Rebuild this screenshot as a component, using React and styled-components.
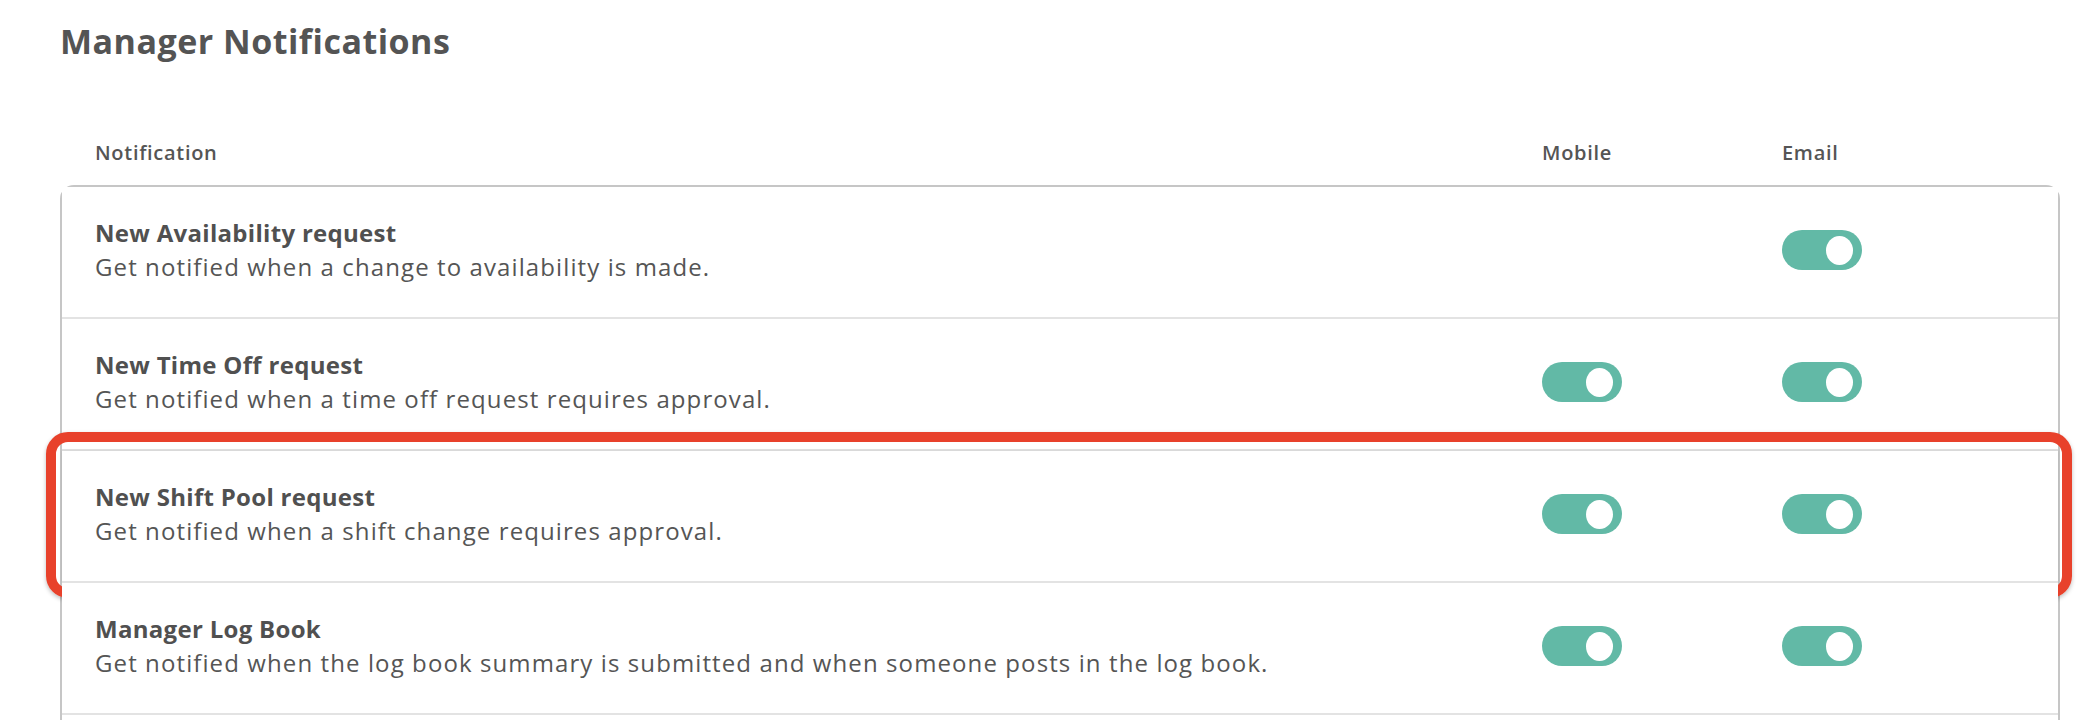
import React from "react";
import styled, { createGlobalStyle } from "styled-components";

const Global = createGlobalStyle`
  html, body { margin: 0; padding: 0; background: #ffffff; }
  body { font-family: "Open Sans", "Liberation Sans", sans-serif; color: #555555; }
  * { box-sizing: border-box; }
`;

const Page = styled.div`
  padding: 19px 28px 0 60px;
`;

const Title = styled.h1`
  margin: 0;
  font-size: 34px;
  line-height: 44px;
  font-weight: 700;
  color: #545454;
  letter-spacing: 0.5px;
`;

const HeaderRow = styled.div`
  display: grid;
  grid-template-columns: 1fr 240px 278px;
  padding: 0 0 0 35px;
  margin-top: 72px;
  height: 34px;
  align-items: center;
`;

const HeaderCell = styled.div`
  font-size: 20px;
  font-weight: 600;
  color: #555555;
  letter-spacing: 0.7px;
`;

const Card = styled.div`
  margin-top: 16px;
  border: 2px solid #c6c6c6;
  border-radius: 14px;
  background: #ffffff;
`;

const Row = styled.div`
  position: relative;
  display: grid;
  grid-template-columns: 1fr 240px 276px;
  align-items: center;
  height: 132px;
  padding: 0 0 0 33px;
  border-bottom: 2px solid #e3e3e3;
  background: #ffffff;
  box-shadow: ${(p) => (p.$highlight ? "0 0 3px rgba(0,0,0,0.12)" : "none")};
`;

const Info = styled.div`
  display: flex;
  flex-direction: column;
  gap: 6px;
  padding-bottom: 5px;
`;

const Name = styled.div`
  font-size: 24px;
  line-height: 28px;
  font-weight: 700;
  color: #505050;
  letter-spacing: 0.3px;
`;

const Desc = styled.div`
  font-size: 24px;
  line-height: 28px;
  font-weight: 400;
  color: #555555;
  letter-spacing: 1.1px;
`;

const Cell = styled.div`
  display: flex;
  align-items: center;
  height: 44px;
  padding-bottom: 4px;
`;

const Toggle = styled.div`
  width: 80px;
  height: 40px;
  border-radius: 20px;
  background: ${(p) => (p.$on ? "#62b9a6" : "#d4d4d4")};
  display: flex;
  align-items: center;
  justify-content: ${(p) => (p.$on ? "flex-end" : "flex-start")};
  padding: 0 9px;
`;

const Knob = styled.span`
  width: 27px;
  height: 29px;
  border-radius: 50%;
  background: #ffffff;
`;

const Highlight = styled.div`
  position: absolute;
  top: -19px;
  bottom: -17px;
  left: -16px;
  right: -14px;
  border: 10px solid #e8412b;
  border-radius: 22px;
  box-shadow: 0 2px 4px rgba(0, 0, 0, 0.25);
  pointer-events: none;
`;

const rows = [
  {
    name: "New Availability request",
    desc: "Get notified when a change to availability is made.",
    mobile: null,
    email: true,
  },
  {
    name: "New Time Off request",
    desc: "Get notified when a time off request requires approval.",
    mobile: true,
    email: true,
  },
  {
    name: "New Shift Pool request",
    desc: "Get notified when a shift change requires approval.",
    mobile: true,
    email: true,
    highlight: true,
  },
  {
    name: "Manager Log Book",
    desc: "Get notified when the log book summary is submitted and when someone posts in the log book.",
    mobile: true,
    email: true,
  },
  {
    name: "New Shift Trade request",
    desc: "Get notified when a shift trade requires approval.",
    mobile: true,
    email: true,
  },
];

function Switch({ on }) {
  return (
    <Toggle $on={on} role="switch" aria-checked={on}>
      <Knob />
    </Toggle>
  );
}

export default function App() {
  return (
    <>
      <Global />
      <Page>
        <Title>Manager Notifications</Title>
        <HeaderRow>
          <HeaderCell>Notification</HeaderCell>
          <HeaderCell>Mobile</HeaderCell>
          <HeaderCell>Email</HeaderCell>
        </HeaderRow>
        <Card>
          {rows.map((r) => (
            <Row key={r.name} $highlight={r.highlight}>
              <Info>
                <Name>{r.name}</Name>
                <Desc>{r.desc}</Desc>
              </Info>
              <Cell>{r.mobile !== null && <Switch on={r.mobile} />}</Cell>
              <Cell>{r.email !== null && <Switch on={r.email} />}</Cell>
              {r.highlight && <Highlight />}
            </Row>
          ))}
        </Card>
      </Page>
    </>
  );
}
